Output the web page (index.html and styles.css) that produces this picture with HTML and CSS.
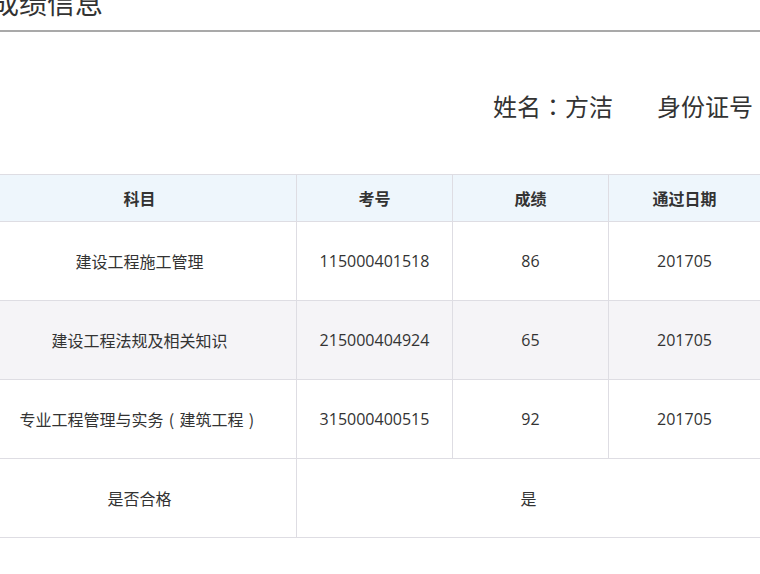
FILE: index.html
```html
<!DOCTYPE html>
<html lang="zh-CN">
<head>
<meta charset="utf-8">
<link rel="stylesheet" href="styles.css">
</head>
<body>
<div class="page">
  <div class="title-bar">
    <h1 class="title">成绩信息</h1>
  </div>
  <div class="info">
    <span class="info-item">姓名<span class="punct" lang="zh-TW">：</span>方洁</span>
    <span class="info-item">身份证号</span>
  </div>
  <table class="scores">
    <colgroup>
      <col class="c1"><col class="c2"><col class="c3"><col class="c4">
    </colgroup>
    <thead>
      <tr><th>科目</th><th>考号</th><th>成绩</th><th>通过日期</th></tr>
    </thead>
    <tbody>
      <tr><td>建设工程施工管理</td><td>115000401518</td><td>86</td><td>201705</td></tr>
      <tr class="alt"><td>建设工程法规及相关知识</td><td>215000404924</td><td>65</td><td>201705</td></tr>
      <tr><td>专业工程管理与实务<span class="paren">(</span>建筑工程<span class="paren">)</span></td><td>315000400515</td><td>92</td><td>201705</td></tr>
      <tr><td>是否合格</td><td colspan="3">是</td></tr>
    </tbody>
  </table>
</div>
</body>
</html>
```

FILE: styles.css
```css
html, body {
  margin: 0;
  padding: 0;
  background: #ffffff;
  overflow: hidden;
}
body {
  width: 760px;
  height: 574px;
  font-family: "Open Sans", "Noto Sans CJK SC", sans-serif;
  color: #333333;
}
.page {
  width: 778px;
  margin-left: -18px;
}
.title-bar {
  height: 30px;
  border-bottom: 2px solid #a9a9a9;
  margin-left: 18px;
  overflow: hidden;
}
.title {
  margin: -15px 0 0 -9px;
  font-family: "Noto Sans CJK SC", sans-serif;
  font-weight: 400;
  font-size: 28px;
  line-height: 34px;
  color: #333333;
}
.info {
  height: 142px;
  display: flex;
  align-items: center;
  gap: 44px;
  padding-left: 511px;
  box-sizing: border-box;
  white-space: nowrap;
  overflow: hidden;
  font-family: "Noto Sans CJK SC", sans-serif;
  font-size: 24px;
  color: #333333;
}
.info-item {
  display: block;
  margin-top: 4px;
}
.punct {
  font-family: "Noto Sans CJK TC", sans-serif;
}
.paren {
  display: inline-block;
  width: 1em;
  text-align: center;
  font-family: "Noto Sans CJK SC", sans-serif;
}
.scores {
  border-collapse: collapse;
  table-layout: fixed;
  width: 778px;
  font-size: 16px;
}
.c1 { width: 314px; }
.c2 { width: 156px; }
.c3 { width: 156px; }
.c4 { width: 152px; }
.scores th, .scores td {
  border: 1px solid #dedde3;
  text-align: center;
  padding: 0;
  font-weight: 400;
  white-space: nowrap;
}
.scores th {
  height: 46px;
  background: #eef6fc;
  font-family: "Noto Sans CJK SC", sans-serif;
  font-weight: 700;
  font-size: 16px;
  color: #333333;
}
.scores td {
  height: 78px;
}
.scores tr.alt td {
  background: #f5f4f7;
}
```
